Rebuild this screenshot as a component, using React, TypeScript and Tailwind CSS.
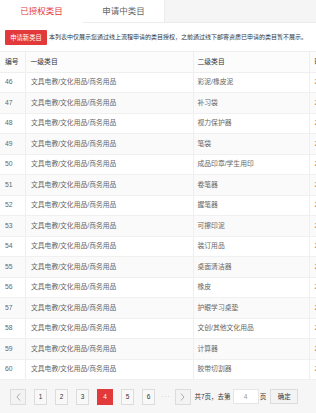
import React from "react";

const rows: [number, string][] = [
  [46, "彩泥/橡皮泥"],
  [47, "补习袋"],
  [48, "视力保护器"],
  [49, "笔袋"],
  [50, "成品印章/学生用印"],
  [51, "卷笔器"],
  [52, "握笔器"],
  [53, "可擦印泥"],
  [54, "装订用品"],
  [55, "桌面清洁器"],
  [56, "橡皮"],
  [57, "护眼学习桌垫"],
  [58, "文创/其他文化用品"],
  [59, "计算器"],
  [60, "胶带切割器"],
];

const pages = [1, 2, 3, 4, 5, 6];

export default function App() {
  return (
    <div
      className="w-[316px] h-[413px] overflow-hidden bg-white text-[#666]"
      style={{ fontFamily: '"Liberation Sans", "Noto Sans CJK SC", sans-serif' }}
    >
      {/* Tabs */}
      <div className="flex h-[23px] bg-[#f5f5f5]">
        <div className="w-[83px] flex items-center justify-center bg-white text-[8.5px] text-[#e4393c]">
          已授权类目
        </div>
        <div className="w-[82px] flex items-center justify-center bg-white border-r border-b border-[#ececec] text-[8.5px] text-[#666]">
          申请中类目
        </div>
        <div className="flex-1 border-b border-[#ececec]" />
      </div>

      {/* Notice */}
      <div className="flex items-center h-[28px] pl-[5px] pt-[1px]">
        <button className="h-[15px] w-[42px] shrink-0 bg-[#e23a3a] text-white text-[6.3px] rounded-[1px] flex items-center justify-center">
          申请新类目
        </button>
        <span className="ml-[2px] text-[6px] text-[#333] whitespace-nowrap">
          本列表中仅展示您通过线上流程申请的类目授权，之前通过线下邮寄资质已申请的类目暂不展示。
        </span>
      </div>

      {/* Table */}
      <div className="border-t border-[#efefef]">
        <div className="flex h-[20.5px] items-center bg-[#fcfcfc] border-b border-[#efefef] text-[6.8px] text-[#333]">
          <div className="w-[25.5px] shrink-0 h-full flex items-center pl-[5px] border-r border-[#efefef]">编号</div>
          <div className="w-[168px] shrink-0 h-full flex items-center pl-[5px] border-r border-[#efefef]">一级类目</div>
          <div className="w-[116px] shrink-0 h-full flex items-center pl-[4px] border-r border-[#efefef]">二级类目</div>
          <div className="flex-1 min-w-0 overflow-hidden h-full flex items-center pl-[5px] whitespace-nowrap">时间</div>
        </div>
        {rows.map(([id, name], i) => (
          <div
            key={id}
            className={`flex h-[20.5px] items-center border-b border-[#f0f0f0] text-[6.8px] ${i % 2 === 1 ? "bg-[#fafafa]" : "bg-white"}`}
          >
            <div className="w-[25.5px] shrink-0 h-full flex items-center pl-[5px] border-r border-[#efefef]">{id}</div>
            <div className="w-[168px] shrink-0 h-full flex items-center pl-[5.5px] border-r border-[#efefef] whitespace-nowrap">
              文具电教/文化用品/商务用品
            </div>
            <div className="w-[116px] shrink-0 h-full flex items-center pl-[4px] border-r border-[#efefef] whitespace-nowrap">{name}</div>
            <div className="flex-1 min-w-0 overflow-hidden h-full flex items-center pl-[5px] whitespace-nowrap text-[#a58a5a]">2019-08-21</div>
          </div>
        ))}
      </div>

      {/* Pagination */}
      <div className="h-[33px] bg-[#f6f6f6] flex items-center pl-[10px] text-[6.5px] text-[#333]">
        <div className="flex items-center gap-[8px]">
          <div className="w-[16px] h-[16px] border border-[#dcdcdc] bg-[#f3f3f3] flex items-center justify-center text-[#999]">
            <svg width="5" height="8" viewBox="0 0 5 8" fill="none" stroke="#999" strokeWidth="0.8">
              <path d="M4 0.5L1 4L4 7.5" />
            </svg>
          </div>
          {pages.map((p) =>
            p === 4 ? (
              <div key={p} className="w-[16px] h-[16px] bg-[#e23a3a] text-white flex items-center justify-center">
                {p}
              </div>
            ) : (
              <div key={p} className="w-[13px] h-[16px] border border-[#dcdcdc] bg-[#f8f8f8] flex items-center justify-center">
                {p}
              </div>
            )
          )}
        </div>
        <span className="ml-[6px] text-[#bbb] tracking-[1px]">···</span>
        <div className="ml-[4px] w-[16px] h-[16px] border border-[#dcdcdc] bg-[#f3f3f3] flex items-center justify-center">
          <svg width="5" height="8" viewBox="0 0 5 8" fill="none" stroke="#999" strokeWidth="0.8">
            <path d="M1 0.5L4 4L1 7.5" />
          </svg>
        </div>
        <span className="ml-[4px] whitespace-nowrap">共7页，去第</span>
        <div className="ml-[2px] w-[26px] h-[15px] bg-white border border-[#e6e6e6] flex items-center justify-center text-[#999]">
          4
        </div>
        <span className="ml-[1px]">页</span>
        <div className="ml-[4px] w-[28px] h-[15px] border border-[#dcdcdc] bg-[#f3f3f3] flex items-center justify-center">
          确定
        </div>
      </div>
    </div>
  );
}
